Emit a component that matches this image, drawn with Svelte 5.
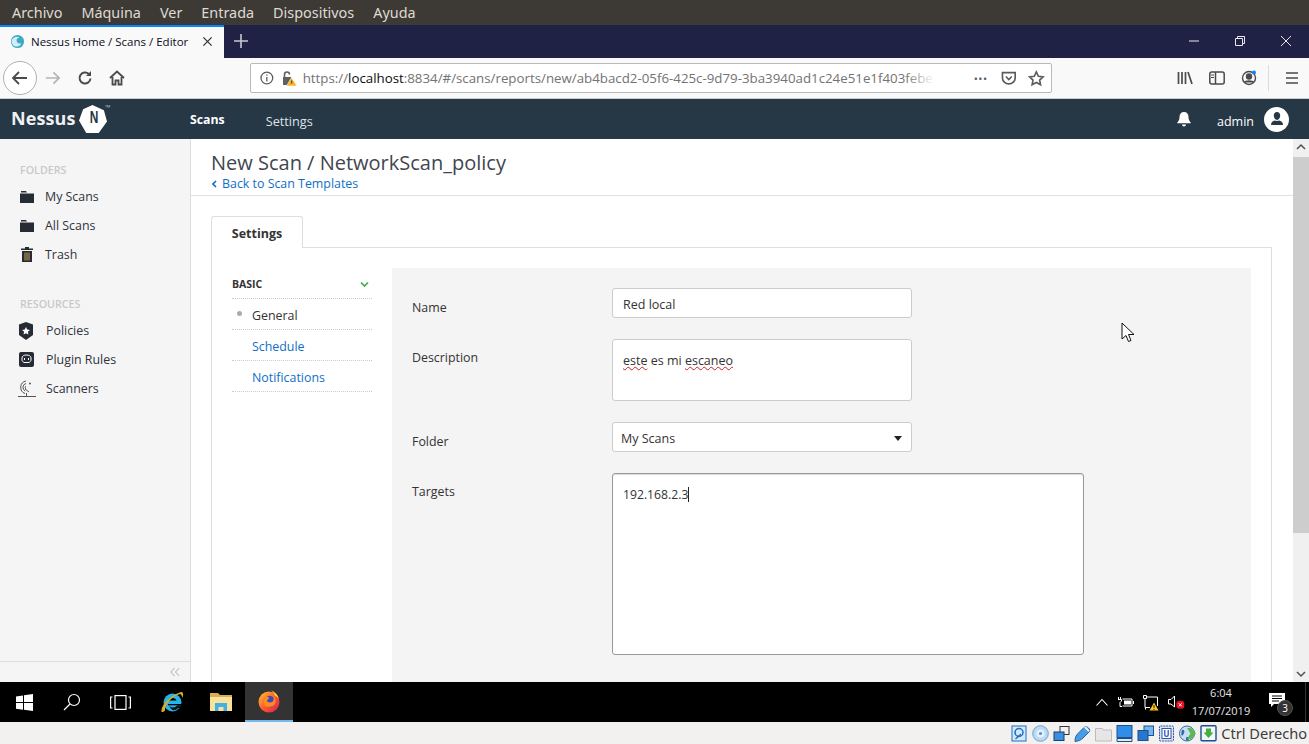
<script>
  const menus = ['Archivo', 'Máquina', 'Ver', 'Entrada', 'Dispositivos', 'Ayuda'];
  const folders = [
    { label: 'My Scans', icon: 'folder' },
    { label: 'All Scans', icon: 'folder' },
    { label: 'Trash', icon: 'trash' }
  ];
  const resources = [
    { label: 'Policies', icon: 'shield' },
    { label: 'Plugin Rules', icon: 'plug' },
    { label: 'Scanners', icon: 'dish' }
  ];
</script>

<div class="screen">
  <div class="vm-menu">
    {#each menus as m}<span>{m}</span>{/each}
  </div>

  <div class="tabbar">
    <div class="tab">
      <svg class="favicon" width="16" height="16" viewBox="0 0 16 16">
        <circle cx="8" cy="8" r="7" fill="#3fa9c4" />
        <path d="M2 6c2-3 6-4 8-2-2 0-3 1-3 3s2 4 5 3c-1 3-5 4-7 3S1 9 2 6z" fill="#cfeef5" />
      </svg>
      <span class="tab-title">Nessus Home / Scans / Editor</span>
      <svg class="tab-close" width="12" height="12" viewBox="0 0 12 12"><path d="M1.5 1.5l9 9M10.500 1.500l-9 9" stroke="#333" stroke-width="1.400" /></svg>
    </div>
    <svg class="newtab" width="14" height="14" viewBox="0 0 14 14"><path d="M7 0v14M0 7h14" stroke="#c8c9d2" stroke-width="1.600" /></svg>
    <div class="win-controls">
      <svg width="12" height="12" viewBox="0 0 12 12"><path d="M1 6h10" stroke="#e8e8ee" /></svg>
      <svg width="12" height="12" viewBox="0 0 12 12" fill="none" stroke="#e8e8ee"><path d="M1.500 3.500h7v7h-7zM3.500 3.500v-2h7v7h-2" /></svg>
      <svg width="12" height="12" viewBox="0 0 12 12"><path d="M1 1l10 10M11 1L1 11" stroke="#e8e8ee" /></svg>
    </div>
  </div>

  <div class="toolbar">
    <div class="back">
      <svg width="18" height="16" viewBox="0 0 18 16" fill="none" stroke="#4a4a4f" stroke-width="1.800"><path d="M16 8H2M8 2L2 8l6 6" /></svg>
    </div>
    <svg class="forward" width="18" height="16" viewBox="0 0 18 16" fill="none" stroke="#b4b4b6" stroke-width="1.800"><path d="M2 8h14M10 2l6 6-6 6" /></svg>
    <svg class="reload" width="16" height="16" viewBox="0 0 16 16" fill="none" stroke="#4a4a4f" stroke-width="2"><path d="M13.500 8.500a5.500 5.500 0 1 1-1.700-4.500" /><path d="M14 1v5H9z" fill="#4a4a4f" stroke="none" /></svg>
    <svg class="home" width="16" height="16" viewBox="0 0 16 16" fill="none" stroke="#4a4a4f" stroke-width="1.800"><path d="M1 8l7-6.500L15 8M3.500 7v7.500h3v-4h3v4h3V7" /></svg>

    <div class="urlbar">
      <svg width="14" height="14" viewBox="0 0 14 14" fill="none" stroke="#5b5b5f" stroke-width="1.300"><circle cx="7" cy="7" r="6" /><path d="M7 6v4.500M7 3.400v1.400" /></svg>
      <svg class="lock" width="16" height="16" viewBox="0 0 16 16">
        <path d="M2 7h8v8H2z" fill="#606064" />
        <path d="M3.500 7V4.500a2.500 2.500 0 0 1 5 0" fill="none" stroke="#606064" stroke-width="1.600" />
        <path d="M10.500 7.500L16 16H5.500z" fill="#f9b218" stroke="#fff" stroke-width=".6" />
        <path d="M10.700 10.500v3" stroke="#3a3a3a" stroke-width="1" />
      </svg>
      <div class="url">https://<b>localhost</b>:8834/#/scans/reports/new/ab4bacd2-05f6-425c-9d79-3ba3940ad1c24e51e1f403febe<i></i></div>
      <span class="dots">•••</span>
      <svg width="16" height="16" viewBox="0 0 16 16" fill="none" stroke="#5b5b5f" stroke-width="1.700"><path d="M1.500 2.500h13v5.500a6.500 6 0 0 1-13 0z" /><path d="M5 6.500l3 3 3-3" /></svg>
      <svg class="star" width="17" height="17" viewBox="0 0 17 17" fill="none" stroke="#5b5b5f" stroke-width="1.700"><path d="M8.500 1.800l2.100 4.400 4.800.6-3.500 3.300.9 4.800-4.300-2.300-4.300 2.300.9-4.800L1.600 6.800l4.800-.6z" /></svg>
    </div>

    <div class="tools">
      <svg width="16" height="16" viewBox="0 0 16 16" stroke="#4a4a4f" stroke-width="1.700"><path d="M1.500 2v12M5 2v12M8.500 2v12M11 2l4 12" /></svg>
      <svg width="16" height="16" viewBox="0 0 16 16" fill="none" stroke="#4a4a4f" stroke-width="1.500"><rect x=".8" y="2" width="14.400" height="12" rx="2" /><path d="M6.500 2v12" /><path d="M2 5h3M2 7.500h3" stroke-width="1" /></svg>
      <svg class="sync" width="16" height="16" viewBox="0 0 16 16" fill="none" stroke="#4a4a4f" stroke-width="1.400"><circle cx="8" cy="8" r="6.500" /><circle cx="8" cy="6.500" r="2.500" fill="#4a4a4f" /><path d="M3.500 12.500c1-2 8-2 9 0" fill="#4a4a4f" /><circle cx="13" cy="2.500" r="2" fill="#0a84ff" stroke="none" /></svg>
      <span class="sep"></span>
      <svg width="14" height="14" viewBox="0 0 14 14" stroke="#4a4a4f" stroke-width="1.600"><path d="M1 2h12M1 7h12M1 12h12" /></svg>
    </div>
  </div>

  <header class="nessus-bar">
    <div class="logo">
      <span class="logo-text">Nessus</span>
      <svg class="hex" width="28" height="28" viewBox="0 0 27 27"><path d="M13 0l11 5 3 11-8 11H7L0 15 4 4z" fill="#fff" /></svg>
      <span class="logo-n">N</span>
      <span class="tm">™</span>
    </div>
    <nav>
      <a class="active" href="#scans">Scans</a>
      <a href="#settings">Settings</a>
    </nav>
    <div class="user">
      <svg width="14" height="16" viewBox="0 0 14 16" fill="#fff"><path d="M7 1c3 0 4.500 2 4.500 5 0 3 1 4 2.200 5.500v.8H.3v-.8C1.500 10 2.500 9 2.500 6 2.500 3 4 1 7 1zM5 13.500h4a2 2 0 0 1-4 0z" /></svg>
      <span class="username">admin</span>
      <div class="avatar">
        <svg width="14" height="14" viewBox="0 0 14 14" fill="#263746"><path d="M7 0c2 0 3.200 1.500 3.200 3.600S9 8 7 8 3.800 5.700 3.800 3.600 5 0 7 0zM1 13c0-3 2-4 4-4.500.6.500 3.400.5 4 0 2 .5 4 1.500 4 4.500z" /></svg>
      </div>
    </div>
  </header>

  <div class="body">
    <aside class="sidebar">
      <div class="side-scroll">
        <h4>FOLDERS</h4>
        {#each folders as f}
          <div class="side-item">{@render sideIcon(f.icon)}<span>{f.label}</span></div>
        {/each}
        <h4 class="second">RESOURCES</h4>
        {#each resources as r}
          <div class="side-item res">{@render sideIcon(r.icon)}<span>{r.label}</span></div>
        {/each}
      </div>
      <div class="side-foot">
        <svg width="10" height="10" viewBox="0 0 10 10" fill="none" stroke="#c9c9c9" stroke-width="1.200"><path d="M4.500 1L.8 5l3.700 4M9.200 1L5.500 5l3.700 4" /></svg>
      </div>
    </aside>

    <main class="main">
      <div class="page-head">
        <h1>New Scan / NetworkScan_policy</h1>
        <a class="backlink" href="#back"><svg width="5" height="8" viewBox="0 0 5 8" fill="none" stroke="#0f6fc6" stroke-width="1.600"><path d="M4 1L1 4l3 3" /></svg>Back to Scan Templates</a>
      </div>
      <div class="content">
        <div class="tabs"><div class="tab-settings">Settings</div></div>
        <div class="panel">
          <div class="subnav">
            <div class="subnav-head">
              <span>BASIC</span>
              <svg width="9" height="7" viewBox="0 0 9 7" fill="none" stroke="#3fae49" stroke-width="1.700"><path d="M1 1.500l3.500 3.500L8 1.500" /></svg>
            </div>
            <div class="subnav-item current">General</div>
            <div class="subnav-item link">Schedule</div>
            <div class="subnav-item link">Notifications</div>
          </div>
          <div class="form">
            <div class="row r-name">
              <div class="lbl">Name</div>
              <div class="field f-name">Red local</div>
            </div>
            <div class="row r-desc">
              <div class="lbl">Description</div>
              <div class="field f-desc"><span class="err">este</span> es mi <span class="err">escaneo</span></div>
            </div>
            <div class="row r-folder">
              <div class="lbl">Folder</div>
              <div class="field f-select">My Scans<i class="caret"></i></div>
            </div>
            <div class="row r-targets">
              <div class="lbl">Targets</div>
              <div class="field f-targets">192.168.2.3<i class="cursor"></i></div>
            </div>
          </div>
        </div>
      </div>
      <svg class="pointer" width="14" height="21" viewBox="0 0 14 21"><path d="M1 1v16l4-3.500 2.500 6 2.500-1-2.500-6H13z" fill="#fff" stroke="#111" /></svg>
    </main>

    <div class="scrollbar">
      <svg width="16" height="17" viewBox="0 0 16 17" fill="none" stroke="#505050" stroke-width="1.500"><path d="M4 10l4-4 4 4" /></svg>
      <div class="track"><div class="thumb"></div></div>
      <svg width="16" height="17" viewBox="0 0 16 17" fill="none" stroke="#505050" stroke-width="1.500"><path d="M4 7l4 4 4-4" /></svg>
    </div>
  </div>

  <div class="taskbar">
    <div class="task-left">
      <div class="task-btn">
        <svg width="17" height="17" viewBox="0 0 17 17" fill="#fff"><path d="M0 2.400l7-1v6.700H0zM8 1.300L17 0v8.100H8zM0 9h7v6.700l-7-1zM8 9h9v8l-9-1.300z" /></svg>
      </div>
      <div class="task-btn">
        <svg width="18" height="18" viewBox="0 0 18 18" fill="none" stroke="#fff" stroke-width="1.200"><circle cx="11" cy="7" r="5.500" /><path d="M7 11l-6 6" /></svg>
      </div>
      <div class="task-btn">
        <svg width="21" height="15" viewBox="0 0 21 15" fill="none" stroke="#fff" stroke-width="1.200"><rect x="5" y=".6" width="11" height="13.800" /><path d="M2.500 2H.6v11h1.900M18.500 2h1.900v11h-1.900" /></svg>
      </div>
      <div class="task-btn ie">
        <svg width="24" height="24" viewBox="0 0 24 24">
          <circle cx="12.500" cy="12.500" r="9" fill="#27b4ea" />
          <path d="M8 10.500c.5-3.500 8-3.500 8.500 0z" fill="#000" />
          <path d="M8 14h14v1.300H8z" fill="#000" />
          <path d="M9 15.300c1 2.800 6 3 8 0h5v3h-4c-3 3-7 3-9-3z" fill="#000" opacity=".85" />
          <path d="M1.500 22C.5 17 7 7 21 2c2.500-.5 2.500 3 1.500 6-.5-2-1-3.500-2.500-4C11 7 4.500 15 5 20.500c-1 1.200-3 1.800-3.500 1.500z" fill="#d9ae22" />
        </svg>
      </div>
      <div class="task-btn folder">
        <svg width="22" height="18" viewBox="0 0 22 18">
          <path d="M0 0h8l2 2h12v4H0z" fill="#d8ae55" />
          <path d="M0 4h22v14H0z" fill="#fbe29a" />
          <path d="M5 18v-8h12v8h-3.500v-4h-5v4z" fill="#3fb0ea" />
        </svg>
      </div>
      <div class="task-btn running">
        <svg width="24" height="24" viewBox="0 0 24 24">
          <defs>
            <linearGradient id="fx" x1="0" y1="0" x2="1" y2="1">
              <stop offset="0" stop-color="#ffcb2e" />
              <stop offset=".5" stop-color="#ff5a2e" />
              <stop offset="1" stop-color="#d6204e" />
            </linearGradient>
          </defs>
          <circle cx="12" cy="13" r="10.500" fill="url(#fx)" />
          <circle cx="12.500" cy="12.500" r="5.800" fill="#3a4bb8" />
          <path d="M8 8c2-1 4 0 4 1s-2 2-2 3 3 2 5 1 2-3 1-6c3 2 3 6 2 8-2 3-7 4-10 2-2-2-2-6 0-9z" fill="#ff8a1f" />
          <path d="M14 1c4 2 7 5 8 9-1-2-3-3-4-3 0-2-2-4-4-6z" fill="#ffd52e" />
        </svg>
      </div>
    </div>
    <div class="tray">
      <svg width="12" height="8" viewBox="0 0 12 8" fill="none" stroke="#fff" stroke-width="1.100"><path d="M.5 7.500L6 1.500l5.500 6" /></svg>
      <svg class="t-batt" width="16" height="12" viewBox="0 0 16 12" fill="none" stroke="#fff"><path d="M4.500 3h9.500v7H4.500M15.500 5v3" /><path d="M6 4.500h7v4H6z" fill="#fff" stroke="none" /><path d="M.5 1v2M2.500 1v2M0 3.500h3.500v1.500L2 6.500v4h2" /></svg>
      <svg class="t-net" width="19" height="17" viewBox="0 0 19 17"><path d="M1.500 1.500h3v3h-3zM4.500 3h11v9M3 4.500v9h5" fill="none" stroke="#fff" /><path d="M3.500 13.500v2" stroke="#fff" /><path d="M7.500 16.500l4.500-8 4.500 8z" fill="#fcc419" /><path d="M12 11v3M12 15v1" stroke="#222" /></svg>
      <svg class="t-vol" width="17" height="14" viewBox="0 0 17 14"><path d="M.5 4.500h2.500l3.500-3.500v11l-3.500-3H.5z" fill="none" stroke="#fff" /><rect x="8.300" y="5.800" width="8" height="8" rx="3" fill="#e81123" /><path d="M10.800 8.300l3 3M13.800 8.300l-3 3" stroke="#fff" /></svg>
      <div class="clock"><div>6:04</div><div>17/07/2019</div></div>
      <div class="notif">
        <svg width="16" height="15" viewBox="0 0 16 15"><path d="M0 0h16v11H5l-3 3v-3H0z" fill="#fff" /><path d="M3 3h10M3 5.500h10M3 8h7" stroke="#000" /></svg>
        <span class="badge">3</span>
      </div>
      <span class="show-desktop"></span>
    </div>
  </div>

  <div class="vbox-status">
    <svg viewBox="0 0 17 17"><rect x="1" y="1" width="14" height="15" fill="#d5e9fb" stroke="#1f6fbd" /><circle cx="8" cy="7.500" r="4" fill="none" stroke="#1f6fbd" stroke-width="1.500" /><path d="M4.500 14l5.500-5" stroke="#1f6fbd" stroke-width="1.300" /></svg>
    <svg viewBox="0 0 17 17"><circle cx="8.500" cy="8.500" r="7.800" fill="#bcd9f2" stroke="#6aa2d3" /><circle cx="8.500" cy="8.500" r="4" fill="#e6f1fb" /><circle cx="8.500" cy="8.500" r="1.600" fill="#5a93c9" /></svg>
    <svg viewBox="0 0 17 17"><rect x="7" y="1.500" width="9" height="8" fill="#f1f1f1" stroke="#333" /><rect x="1" y="7" width="10" height="8.500" fill="#3b8fe0" stroke="#1d3f6e" /></svg>
    <svg viewBox="0 0 17 17"><path d="M1 16.500c0-4 1-6 3-8l6-6c1-1 3-1 4.500.5s1.500 3 .5 4l-6 6c-2 2-4 3-8 3.500z" fill="#4a9be6" stroke="#1f5fa8" /><path d="M10 2.500l4.500 4.500 1-1.500L12 1.500z" fill="#eef2f7" /></svg>
    <svg viewBox="0 0 17 17"><path d="M.5 3.500h7l1 1.500h8v11H.5z" fill="#e6e6e6" stroke="#bcbcbc" /></svg>
    <svg viewBox="0 0 17 17"><rect x="1" y=".5" width="15" height="12" fill="#2f8fe8" stroke="#1d4f8c" /><path d="M1 13.500h15v3H1z" fill="#e8e8e8" stroke="#1d4f8c" /></svg>
    <svg viewBox="0 0 17 17"><rect x="7" y="1" width="9.500" height="9.500" fill="#76b5ee" stroke="#1d4f8c" /><rect x="1" y="5.500" width="10" height="10" fill="#2577cf" stroke="#1d4f8c" /></svg>
    <svg viewBox="0 0 17 17"><rect x="1.500" y="1" width="14" height="15" rx="1" fill="#d7e3f7" stroke="#3355a8" stroke-dasharray="2 .8" /><rect x="4" y="3.500" width="9" height="10" fill="#fff" stroke="#3355a8" /><path d="M6.800 5v5c0 1.800 3.400 1.800 3.400 0V5" fill="none" stroke="#3355a8" stroke-width="1.300" /></svg>
    <svg viewBox="0 0 17 17"><circle cx="8" cy="8.500" r="7.500" fill="#c8dff3" stroke="#2f6cab" /><path d="M3 5c3-1 3 3 1 5s-2-2-1-5zM8 12c2 0 3 2 1 3.500s-3-3.500-1-3.500z" fill="#2f6cab" /><path d="M8 3h4l5 5.500-5 5.500H8l3.500-5.500z" fill="#5cb84a" /></svg>
    <svg viewBox="0 0 17 17"><rect x="1" y=".8" width="15" height="15" rx="1" fill="#f2f7fc" stroke="#1d4f8c" stroke-width="1.400" /><path d="M6 3.500h5v4h2.500L8.500 13l-5-5.500H6z" fill="#45b03f" /></svg>
    <span class="host-key">Ctrl Derecho</span>
  </div>
</div>

{#snippet sideIcon(kind)}
  {#if kind === 'folder'}
    <svg class="si" width="14" height="13" viewBox="0 0 14 13" fill="#272b33"><path d="M1 1h5l1 1.500H1zM0 3.400h14V13H0z" /></svg>
  {:else if kind === 'trash'}
    <svg class="si" width="14" height="15" viewBox="0 0 14 15"><path d="M5 0h4v1.500h4V3H1V1.500h4zM2 4h10v11H2z" fill="#272b33" /><path d="M5 5.500v8M7 5.500v8M9 5.500v8" stroke="#c7a05a" /></svg>
  {:else if kind === 'shield'}
    <svg class="si wide" width="14" height="18" viewBox="0 0 14 18"><path d="M7 0l7 2.500V13l-7 5-7-5V2.500z" fill="#272b33" /><path d="M7 5l1.200 2.600 2.800.3-2.100 1.900.6 2.800L7 11.200l-2.500 1.400.6-2.800L3 7.900l2.800-.3z" fill="#fff" /></svg>
  {:else if kind === 'plug'}
    <svg class="si wide plug" width="15" height="15" viewBox="0 0 15 15"><rect width="15" height="15" rx="2" fill="#272b33" /><path d="M3 6c0-2 2-3 4.500-3S12 4 12 6v2c0 1-1 2-2 2.500h-5C4 10 3 9 3 8z" fill="none" stroke="#fff" /><path d="M5.500 6v2M9.500 6v2" stroke="#fff" /></svg>
  {:else}
    <svg class="si wide dish" width="18" height="18" viewBox="0 0 18 18" fill="none" stroke="#555"><path d="M8 1a6.500 6.500 0 0 0-1 12.500M8 3.500a4 4 0 0 0-.8 7.500M8 6a1.800 1.800 0 0 0 0 3M7 9l4 3" /><circle cx="12" cy="3.500" r="1" fill="#555" stroke="none" /><path d="M8.500 13v3M0 16.500h18" /></svg>
  {/if}
{/snippet}

<style>
  :global(body) {
    margin: 0;
    overflow: hidden;
  }
  .screen {
    width: 1309px;
    height: 744px;
    display: flex;
    flex-direction: column;
    overflow: hidden;
    font-family: "Open Sans", sans-serif;
    color: #333;
    position: relative;
  }
  .vm-menu {
    height: 25px;
    flex: none;
    background: #3d3a35;
    color: #dfdbd2;
    font-family: "Noto Sans", sans-serif;
    font-size: 14.400px;
    display: flex;
    gap: 19px;
    padding-left: 12px;
    align-items: center;
  }
  .tabbar {
    height: 33px;
    flex: none;
    background: #1f2244;
    display: flex;
    align-items: center;
  }
  .tab {
    width: 224px;
    height: 33px;
    box-sizing: border-box;
    background: #f9f9fa;
    border-top: 2px solid #0a84ff;
    display: flex;
    align-items: center;
    padding: 0 11px 2px 10px;
    gap: 6px;
    font-size: 11.500px;
    color: #0c0c22;
  }
  .favicon {
    flex: none;
    width: 15px;
    height: 15px;
  }
  .tab-title {
    flex: 1;
    white-space: nowrap;
  }
  .tab-close {
    flex: none;
    width: 11px;
    height: 11px;
  }
  .newtab {
    margin-left: 10px;
    margin-bottom: 2px;
  }
  .win-controls {
    margin-left: auto;
    display: flex;
    gap: 34px;
    padding-right: 17px;
    margin-bottom: 2px;
  }
  .toolbar {
    height: 41px;
    flex: none;
    box-sizing: border-box;
    background: #f9f9fa;
    border-bottom: 1px solid #ccc;
    display: flex;
    align-items: center;
    padding-left: 3px;
  }
  .back {
    width: 32px;
    height: 32px;
    border: 1px solid #b1b1b3;
    border-radius: 50%;
    background: #fff;
    display: flex;
    align-items: center;
    justify-content: center;
    flex: none;
  }
  .forward {
    margin-left: 7px;
    width: 17px;
  }
  .reload {
    margin-left: 16px;
  }
  .home {
    margin-left: 16px;
  }
  .urlbar {
    margin-left: 125px;
    width: 802px;
    height: 30px;
    box-sizing: border-box;
    background: #fff;
    border: 1px solid #b9b9bb;
    border-radius: 2px;
    display: flex;
    align-items: center;
    padding: 0 6px 0 9px;
    flex: none;
  }
  .lock {
    margin-left: 7px;
    flex: none;
  }
  .url {
    position: relative;
    margin-left: 6px;
    width: 632px;
    flex: none;
    overflow: hidden;
    white-space: nowrap;
    font-size: 13.300px;
    color: #737373;
  }
  .url b {
    font-weight: 400;
    color: #0c0c0d;
  }
  .url i {
    position: absolute;
    right: 0;
    top: 0;
    bottom: 0;
    width: 30px;
    background: linear-gradient(to right, rgba(255, 255, 255, 0), #fff);
  }
  .dots {
    margin-left: 39px;
    font-size: 11px;
    letter-spacing: 0.500px;
    color: #5b5b5f;
    width: 27px;
    flex: none;
  }
  .star {
    margin-left: 12px;
  }
  .tools {
    margin-left: 125px;
    display: flex;
    align-items: center;
    gap: 16px;
  }
  .sep {
    width: 1px;
    height: 26px;
    background: #dcdcde;
    margin: 0 0 0 -5px;
  }
  .nessus-bar {
    height: 40px;
    flex: none;
    background: #263746;
    display: flex;
    align-items: center;
    color: #fff;
    padding-left: 11px;
  }
  .logo {
    width: 179px;
    flex: none;
    display: flex;
    align-items: center;
    position: relative;
  }
  .logo-text {
    font-size: 18px;
    font-weight: 700;
    color: #eef0f2;
    letter-spacing: 0.100px;
    margin-top: -2px;
  }
  .hex {
    margin-left: 3px;
    margin-top: -1px;
  }
  .logo-n {
    position: absolute;
    left: 77px;
    top: 2px;
    font-size: 17px;
    font-weight: 700;
    color: #263746;
    font-family: "Liberation Sans", sans-serif;
    transform: scaleX(0.7);
  }
  .tm {
    position: absolute;
    left: 94px;
    top: -3px;
    font-size: 7px;
    color: #bbb;
  }
  nav {
    display: flex;
    gap: 41px;
    font-size: 12.700px;
    align-items: center;
  }
  nav a {
    color: #dfe4e8;
    text-decoration: none;
    padding-top: 4px;
  }
  nav a.active {
    color: #fff;
    font-weight: 700;
    font-size: 12.300px;
    padding-top: 0;
  }
  .user {
    margin-left: auto;
    display: flex;
    align-items: center;
    padding-right: 20px;
  }
  .user > svg {
    margin-right: 1px;
  }
  .username {
    margin-left: 25px;
    font-size: 12.500px;
    padding-top: 5px;
  }
  .avatar {
    width: 25px;
    height: 25px;
    border-radius: 50%;
    background: #fff;
    margin-left: 10px;
    display: flex;
    align-items: center;
    justify-content: center;
  }
  .body {
    flex: 1;
    min-height: 0;
    display: flex;
  }
  .sidebar {
    width: 191px;
    box-sizing: border-box;
    flex: none;
    background: #f5f5f5;
    border-right: 1px solid #dedede;
    display: flex;
    flex-direction: column;
  }
  .side-scroll {
    flex: 1;
    padding: 25px 0 0 20px;
  }
  h4 {
    margin: 0 0 6px;
    font-size: 10.700px;
    line-height: 12px;
    font-weight: 600;
    color: #c9c9c9;
  }
  h4.second {
    margin-top: 29px;
    margin-bottom: 6px;
  }
  .side-item {
    height: 29px;
    display: flex;
    align-items: center;
    font-size: 12.400px;
    color: #2f3340;
  }
  .si {
    flex: none;
    margin-right: 11px;
  }
  .si.wide {
    margin-left: -1px;
    margin-right: 13px;
  }
  .si.plug {
    margin-right: 12px;
  }
  .si.dish {
    margin-left: -2px;
    margin-right: 10px;
  }
  .side-foot {
    height: 20px;
    flex: none;
    border-top: 1px solid #dedede;
    display: flex;
    justify-content: flex-end;
    align-items: center;
    padding-right: 10px;
  }
  .main {
    flex: 1;
    min-width: 0;
    background: #fff;
    position: relative;
    overflow: hidden;
  }
  .page-head {
    height: 57px;
    box-sizing: border-box;
    border-bottom: 1px solid #e0e0e0;
    padding: 10px 0 0 20px;
  }
  h1 {
    margin: 0;
    font-size: 20px;
    line-height: 27px;
    font-weight: 400;
    color: #3f4650;
  }
  .backlink {
    display: block;
    font-size: 12.400px;
    line-height: 16px;
    color: #0f6fc6;
    text-decoration: none;
  }
  .backlink svg {
    margin: 0 5px 0 1px;
  }
  .content {
    padding: 20px 21px 0 20px;
  }
  .tabs {
    height: 32px;
    display: flex;
  }
  .tab-settings {
    width: 92px;
    height: 32px;
    box-sizing: border-box;
    background: #fff;
    border: 1px solid #dedede;
    border-bottom: 0;
    border-radius: 3px 3px 0 0;
    font-size: 12.500px;
    font-weight: 700;
    color: #333;
    display: flex;
    align-items: center;
    justify-content: center;
    position: relative;
    z-index: 1;
    padding-top: 2px;
  }
  .panel {
    height: 520px;
    box-sizing: border-box;
    margin-top: -1px;
    border: 1px solid #dedede;
    border-bottom: 0;
    padding: 20px 20px 0;
    display: flex;
    gap: 20px;
  }
  .subnav {
    width: 140px;
    flex: none;
  }
  .subnav-head {
    height: 31px;
    box-sizing: border-box;
    border-bottom: 1px dotted #ccc;
    display: flex;
    align-items: center;
    justify-content: space-between;
    font-size: 10.500px;
    font-weight: 700;
    color: #333;
    padding: 2px 3px 0 0;
  }
  .subnav-item {
    height: 31px;
    box-sizing: border-box;
    border-bottom: 1px dotted #ccc;
    display: flex;
    align-items: center;
    padding: 3px 0 0 20px;
    font-size: 12.400px;
    position: relative;
  }
  .subnav-item.current::before {
    content: "";
    position: absolute;
    left: 5px;
    top: 12px;
    width: 5px;
    height: 5px;
    border-radius: 50%;
    background: #aaa;
  }
  .link {
    color: #0f6fc6;
  }
  .form {
    flex: 1;
    background: #f4f4f4;
    padding: 20px 20px 0;
  }
  .row {
    display: flex;
    margin-bottom: 21px;
  }
  .lbl {
    width: 200px;
    flex: none;
    font-size: 12.400px;
    color: #333;
    line-height: 16px;
  }
  .r-name .lbl {
    padding-top: 12px;
  }
  .r-desc .lbl {
    padding-top: 11px;
  }
  .r-folder .lbl {
    padding-top: 12px;
  }
  .r-targets .lbl {
    padding-top: 11px;
  }
  .field {
    box-sizing: border-box;
    width: 300px;
    background: #fff;
    border: 1px solid #ccc;
    border-radius: 3px;
    font-size: 12.500px;
    color: #333;
    padding-left: 10px;
  }
  .f-name {
    height: 30px;
    line-height: 31px;
  }
  .f-desc {
    height: 62px;
    padding-top: 13px;
    line-height: 16px;
  }
  .err {
    text-decoration: underline wavy #d32020 1px;
    text-underline-offset: 1px;
  }
  .f-select {
    height: 30px;
    line-height: 31px;
    position: relative;
    padding-left: 8px;
  }
  .caret {
    position: absolute;
    right: 9px;
    top: 13px;
    border-left: 4.500px solid transparent;
    border-right: 4.500px solid transparent;
    border-top: 5px solid #222;
  }
  .f-targets {
    width: 472px;
    height: 182px;
    border-color: #999;
    box-shadow: inset 0 1px 1px rgba(0, 0, 0, 0.15);
    padding-top: 13px;
    line-height: 16px;
    font-size: 12.200px;
  }
  .cursor {
    display: inline-block;
    width: 1px;
    height: 15px;
    background: #222;
    vertical-align: -3px;
  }
  .pointer {
    position: absolute;
    left: 930px;
    top: 183px;
  }
  .scrollbar {
    width: 16px;
    flex: none;
    background: #f0f0f0;
    display: flex;
    flex-direction: column;
  }
  .scrollbar svg {
    flex: none;
  }
  .track {
    flex: 1;
    min-height: 0;
  }
  .thumb {
    height: 376px;
    margin-top: 1px;
    background: #cdcdcd;
  }
  .taskbar {
    height: 40px;
    flex: none;
    background: #000;
    display: flex;
    align-items: center;
    justify-content: space-between;
    color: #fff;
  }
  .task-left {
    display: flex;
    height: 100%;
  }
  .task-btn {
    width: 48px;
    height: 100%;
    box-sizing: border-box;
    display: flex;
    align-items: center;
    justify-content: center;
  }
  .ie {
    margin-left: 3px;
    width: 49px;
  }
  .folder {
    width: 49px;
  }
  .running {
    width: 48px;
    background: #333;
    border-bottom: 2px solid #76b9ed;
  }
  .tray {
    display: flex;
    align-items: center;
    height: 100%;
    box-sizing: border-box;
  }
  .t-batt {
    margin-left: 10px;
  }
  .t-net {
    margin-left: 8px;
  }
  .t-vol {
    margin-left: 7px;
  }
  .clock {
    margin-left: 5px;
    width: 62px;
    text-align: center;
    font-size: 11px;
    line-height: 18px;
    color: #e6e6e6;
  }
  .notif {
    position: relative;
    margin-left: 17px;
    width: 24px;
    height: 24px;
    margin-top: 1px;
  }
  .badge {
    position: absolute;
    left: 8px;
    top: 9px;
    width: 16px;
    height: 16px;
    border-radius: 50%;
    background: #333;
    border: 1px solid #555;
    box-sizing: border-box;
    font-size: 10px;
    line-height: 14px;
    text-align: center;
  }
  .show-desktop {
    width: 1px;
    height: 100%;
    background: #333;
    margin: 0 3px 0 12px;
  }
  .vbox-status {
    height: 22px;
    flex: none;
    background: #f2f1ef;
    display: flex;
    align-items: center;
    justify-content: flex-end;
    gap: 4px;
    padding-right: 2px;
  }
  .vbox-status svg {
    width: 17px;
    height: 17px;
    flex: none;
  }
  .host-key {
    font-size: 14.600px;
    font-family: "Noto Sans", sans-serif;
    color: #3c3c3c;
    white-space: nowrap;
  }
</style>
